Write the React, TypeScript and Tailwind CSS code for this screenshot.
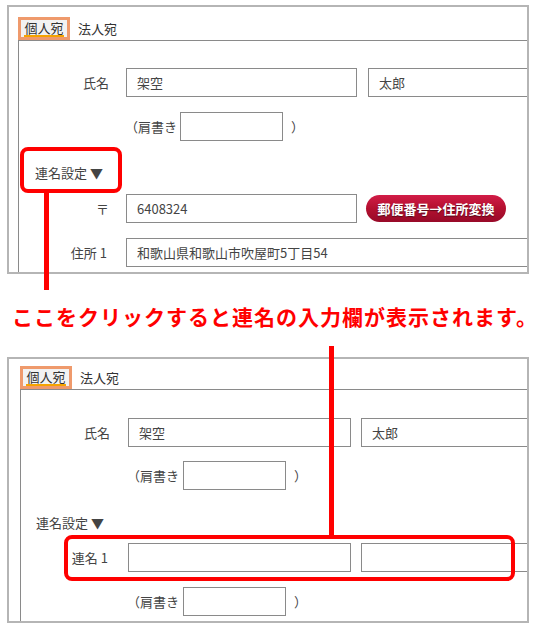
import type { ReactNode } from "react";

const font = { fontFamily: '"Noto Sans CJK JP", "Noto Sans", sans-serif' };

function Field({ w, children }: { w: string; children?: ReactNode }) {
  return (
    <div className={`${w} h-[29px] shrink-0 border border-[#8a8a8a] bg-white flex items-center pl-[10px] text-[13px] text-[#444]`}>
      {children}
    </div>
  );
}

function Tabs() {
  return (
    <div className="flex items-center h-[23px]">
      <div className="w-[52px] h-[23px] border-[3px] border-[#ef9a6c] bg-[#f2f2f2] flex items-center justify-center">
        <span className="text-[13px] leading-[15px] text-[#333] border-b-2 border-[#f5a300]">個人宛</span>
      </div>
      <span className="ml-[8px] text-[13px] text-[#333]">法人宛</span>
    </div>
  );
}

function Title({ pad }: { pad: string }) {
  return (
    <div className={`flex items-center h-[29px] ${pad}`}>
      <span className="text-[13px] text-[#444]">連名設定 ▼</span>
    </div>
  );
}

function Honorific({ pad, gap }: { pad: string; gap: string }) {
  return (
    <div className={`flex items-center h-[29px] ${pad}`}>
      <span className="text-[13px] text-[#444] w-[52px] -ml-[1px]">（肩書き</span>
      <div className={gap}>
        <Field w="w-[103px]" />
      </div>
      <span className="ml-[8px] text-[13px] text-[#444]">）</span>
    </div>
  );
}

export default function App() {
  return (
    <div className="relative w-[540px] h-[627px] bg-white overflow-hidden" style={font}>
      {/* 上のスクリーンショット */}
      <div className="ml-[7px] mt-[5px] w-[522px] h-[269px] border-2 border-[#b5b5b5] overflow-hidden">
        <div className="pl-[9px] pt-[10px]">
          <Tabs />
          <div className="w-[640px] h-[300px] border-t border-l border-[#8a8a8a]">
            <div className="mt-[27px] flex items-center">
              <span className="w-[90px] text-right text-[13px] text-[#444]">氏名</span>
              <div className="ml-[17px] flex gap-[11px]">
                <Field w="w-[231px]">架空</Field>
                <Field w="w-[231px]">太郎</Field>
              </div>
            </div>
            <div className="mt-[15px]">
              <Honorific pad="pl-[107px]" gap="ml-[3px]" />
            </div>
            <div className="mt-[17px]">
              <Title pad="pl-[16px]" />
            </div>
            <div className="mt-[7px] flex items-center">
              <span className="w-[90px] text-right text-[13px] text-[#444]">〒</span>
              <div className="ml-[17px]">
                <Field w="w-[231px]">6408324</Field>
              </div>
              <button className="ml-[9px] w-[140px] h-[27px] rounded-full bg-gradient-to-b from-[#d21c47] via-[#b3102f] to-[#980a29] text-white text-[13px] font-bold [text-shadow:0_1px_1px_rgba(0,0,0,0.5)]">
                郵便番号→住所変換
              </button>
            </div>
            <div className="mt-[15px] flex items-center">
              <span className="w-[88px] text-right text-[13px] text-[#444]">住所 1</span>
              <div className="ml-[19px]">
                <Field w="w-[480px]">和歌山県和歌山市吹屋町5丁目54</Field>
              </div>
            </div>
          </div>
        </div>
      </div>

      {/* 説明文 */}
      <div className="h-[83px] flex items-center pl-[12px] pt-[3px]">
        <p className="text-[21px] font-bold tracking-[1px] text-[#ff0000] whitespace-nowrap">
          ここをクリックすると連名の入力欄が表示されます。
        </p>
      </div>

      {/* 下のスクリーンショット */}
      <div className="ml-[7px] w-[522px] h-[266px] border-2 border-[#b5b5b5] overflow-hidden">
        <div className="pl-[11px] pt-[7px]">
          <Tabs />
          <div className="w-[640px] h-[300px] border-t border-l border-[#8a8a8a]">
            <div className="mt-[28px] flex items-center">
              <span className="w-[89px] text-right text-[13px] text-[#444]">氏名</span>
              <div className="ml-[18px] flex gap-[10px]">
                <Field w="w-[223px]">架空</Field>
                <Field w="w-[231px]">太郎</Field>
              </div>
            </div>
            <div className="mt-[14px]">
              <Honorific pad="pl-[107px]" gap="ml-[4px]" />
            </div>
            <div className="mt-[18px]">
              <Title pad="pl-[15px]" />
            </div>
            <div className="mt-[6px] flex items-center">
              <span className="w-[87px] text-right text-[13px] text-[#444]">連名 1</span>
              <div className="ml-[20px] flex gap-[10px]">
                <Field w="w-[223px]" />
                <Field w="w-[231px]" />
              </div>
            </div>
            <div className="mt-[15px]">
              <Honorific pad="pl-[107px]" gap="ml-[4px]" />
            </div>
          </div>
        </div>
      </div>

      {/* 注釈（赤枠と線） */}
      <div className="absolute left-[20px] top-[147px] w-[102px] h-[46px] border-4 border-[#ff0000] rounded-[8px]" />
      <div className="absolute left-[44px] top-[193px] w-[5px] h-[97px] bg-[#ff0000]" />
      <div className="absolute left-[329px] top-[346px] w-[5px] h-[189px] bg-[#ff0000]" />
      <div className="absolute left-[64px] top-[535px] w-[451px] h-[46px] border-4 border-[#ff0000] rounded-[8px]" />
    </div>
  );
}
